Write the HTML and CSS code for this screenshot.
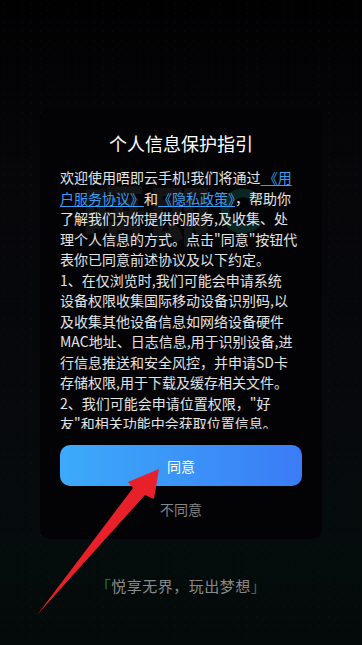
FILE: index.html
```html
<!DOCTYPE html>
<html lang="zh-CN">
<head>
<meta charset="utf-8">
<title>个人信息保护指引</title>
<link rel="stylesheet" href="styles.css">
</head>
<body>
<div class="screen">
  <div class="card">
    <div class="watermark" aria-hidden="true">
      <span class="wm-text">唔即</span>
      <svg class="wm-ring" width="48" height="48" viewBox="0 0 48 48"><path d="M40 14 A18 18 0 1 0 40 34" fill="none" stroke="#0b2622" stroke-width="9"/></svg>
    </div>
    <h1 class="title">个人信息保护指引</h1>
    <div class="scroll">
      <p class="body">欢迎使用唔即云手机!我们将通过<a class="link" href="#"> 《用<br>户服务协议》</a>和<a class="link" href="#">《隐私政策》</a>，帮助你<br>了解我们为你提供的服务,及收集、处<br>理个人信息的方式。点击"同意"按钮代<br>表你已同意前述协议及以下约定。<br>1、在仅浏览时,我们可能会申请系统<br>设备权限收集国际移动设备识别码,以<br>及收集其他设备信息如网络设备硬件<br>MAC地址、日志信息,用于识别设备,进<br>行信息推送和安全风控，并申请SD卡<br>存储权限,用于下载及缓存相关文件。<br>2、我们可能会申请位置权限，"好<br>友"和相关功能中会获取位置信息。</p>
    </div>
    <button class="agree" type="button">同意</button>
    <div class="disagree">不同意</div>
  </div>
  <div class="tagline"><span class="bracket">「</span>悦享无界，玩出梦想<span class="bracket">」</span></div>
</div>
<svg class="arrow" width="362" height="645" viewBox="0 0 362 645" aria-hidden="true">
  <polygon points="37,615 133,488 128,482 159,469 154,499 145,495" fill="#e8202a"/>
</svg>
</body>
</html>
```
FILE: styles.css
```css
* { box-sizing: border-box; }
html, body {
  margin: 0;
  padding: 0;
  width: 362px;
  height: 645px;
  overflow: hidden;
  background: #000;
  font-family: "Noto Sans CJK SC", "Noto Sans", sans-serif;
}
.screen {
  position: relative;
  width: 362px;
  height: 645px;
  padding-top: 107px;
  display: flex;
  flex-direction: column;
  align-items: center;
  background:
    radial-gradient(circle, rgba(30, 50, 55, 0.3) 0.6px, transparent 1px) 0 0 / 9px 9px,
    linear-gradient(180deg, #010102 0%, #060609 25%, #07080c 60%, #050c0c 85%, #040909 100%);
}
.card {
  position: relative;
  width: 282px;
  padding: 24px 20px 20px;
  background: #030305;
  border-radius: 10px;
  display: flex;
  flex-direction: column;
  overflow: hidden;
}
.watermark {
  position: absolute;
  left: 42px;
  top: 72px;
  display: flex;
  align-items: center;
  pointer-events: none;
}
.wm-text {
  font-size: 64px;
  font-weight: 900;
  line-height: 64px;
  color: #141417;
  letter-spacing: 2px;
}
.wm-ring { margin-left: 4px; }
.title {
  position: relative;
  margin: 0;
  font-size: 18px;
  font-weight: 400;
  line-height: 24px;
  color: #ffffff;
  text-align: center;
}
.scroll {
  position: relative;
  margin-top: 12px;
  height: 262px;
  overflow: hidden;
}
.body {
  margin: 0;
  font-size: 14px;
  line-height: 20.5px;
  color: #e4e4e4;
  white-space: nowrap;
}
.link {
  color: #3a9ff0;
  text-decoration: underline;
  text-underline-offset: 2px;
}
.agree {
  margin-top: 16px;
  height: 41px;
  width: 100%;
  border: 0;
  border-radius: 10px;
  background: linear-gradient(90deg, #3daaf9 0%, #3b94f8 50%, #3b7cf6 100%);
  color: #ffffff;
  font-family: inherit;
  font-size: 14px;
  padding: 0;
}
.disagree {
  margin-top: 13px;
  font-size: 14px;
  line-height: 20px;
  color: #858585;
  text-align: center;
}
.tagline {
  margin-top: 37px;
  font-size: 15px;
  line-height: 20px;
  color: #8a8a8a;
  letter-spacing: 0.5px;
}
.bracket { color: #1d7a52; }
.arrow {
  position: absolute;
  left: 0;
  top: 0;
  pointer-events: none;
}
```
